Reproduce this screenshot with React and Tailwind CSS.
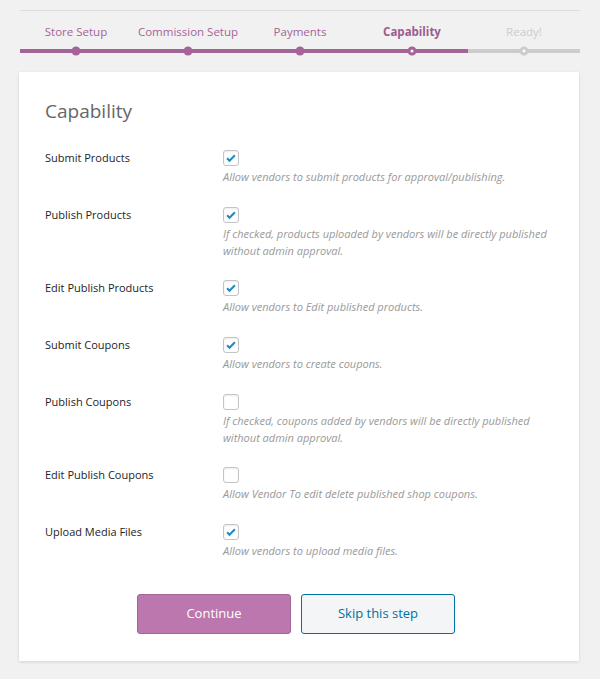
import React from "react";

const steps = [
  { name: "Store Setup", state: "done" },
  { name: "Commission Setup", state: "done" },
  { name: "Payments", state: "done" },
  { name: "Capability", state: "active" },
  { name: "Ready!", state: "todo" },
];

const fields = [
  { label: "Submit Products", checked: true, desc: "Allow vendors to submit products for approval/publishing." },
  {
    label: "Publish Products",
    checked: true,
    desc: "If checked, products uploaded by vendors will be directly published without admin approval.",
  },
  { label: "Edit Publish Products", checked: true, desc: "Allow vendors to Edit published products." },
  { label: "Submit Coupons", checked: true, desc: "Allow vendors to create coupons." },
  {
    label: "Publish Coupons",
    checked: false,
    desc: "If checked, coupons added by vendors will be directly published without admin approval.",
  },
  { label: "Edit Publish Coupons", checked: false, desc: "Allow Vendor To edit delete published shop coupons." },
  { label: "Upload Media Files", checked: true, desc: "Allow vendors to upload media files." },
];

function Checkbox({ checked }) {
  return (
    <span className="flex h-[16px] w-[16px] items-center justify-center rounded-[3px] border border-[#c3c4c7] bg-white shadow-[inset_0_1px_2px_rgba(0,0,0,0.08)]">
      {checked && (
        <svg width="12" height="12" viewBox="0 0 20 20">
          <path d="M3.5 10.5l4 4 9-9" fill="none" stroke="#1e8cbe" strokeWidth="3.4" />
        </svg>
      )}
    </span>
  );
}

export default function App() {
  return (
    <div className="min-h-screen bg-[#f1f1f1] pt-[10px] font-['Open_Sans',sans-serif]">
      <div className="ml-[20px] w-[560px] border-t border-[#dcdcdc]">
        <div className="grid grid-cols-5 pt-[13px]">
          {steps.map((s) => (
            <div key={s.name} className="flex flex-col items-center">
              <span
                className={
                  "text-[11.5px] leading-[16px] " +
                  (s.state === "active"
                    ? "font-bold text-[#9b5c8f]"
                    : s.state === "done"
                    ? "text-[#a46497]"
                    : "text-[#cccccc]")
                }
              >
                {s.name}
              </span>
              <div className={"relative mt-[9px] h-[4px] w-full " + (s.state === "todo" ? "bg-[#cccccc]" : "bg-[#a46497]")}>
                <span
                  className={
                    "absolute left-1/2 top-1/2 h-[9px] w-[9px] -translate-x-1/2 -translate-y-1/2 rounded-full " +
                    (s.state === "done"
                      ? "bg-[#a46497]"
                      : s.state === "active"
                      ? "border-[3px] border-[#a46497] bg-white"
                      : "border-[3px] border-[#cccccc] bg-white")
                  }
                />
              </div>
            </div>
          ))}
        </div>
      </div>

      <div className="ml-[19px] mt-[19px] w-[560px] bg-white pb-[27px] pl-[26px] pr-[20px] pt-[26px] shadow-[0_1px_3px_rgba(0,0,0,0.13)]">
        <h1 className="text-[19px] leading-[26px] text-[#666666]">Capability</h1>

        <div className="mt-[26px] flex flex-col gap-[21.67px]">
          {fields.map((f) => (
            <div key={f.label} className="grid grid-cols-[178px_1fr]">
              <div className="text-[11px] leading-[16px] text-[#1d2327]">{f.label}</div>
              <div>
                <Checkbox checked={f.checked} />
                <p className="mt-[2px] max-w-[332px] text-[11px] italic leading-[17px] text-[#999999]">{f.desc}</p>
              </div>
            </div>
          ))}
        </div>

        <div className="mt-[35px] flex justify-center gap-[10px] pr-[12px]">
          <button className="h-[40px] w-[154px] rounded-[3px] border border-[#a36597] bg-[#bb77ae] text-[13px] text-white">
            Continue
          </button>
          <button className="h-[40px] w-[154px] rounded-[3px] border border-[#0071a1] bg-[#f3f5f6] text-[13px] text-[#0071a1]">
            Skip this step
          </button>
        </div>
      </div>
    </div>
  );
}
